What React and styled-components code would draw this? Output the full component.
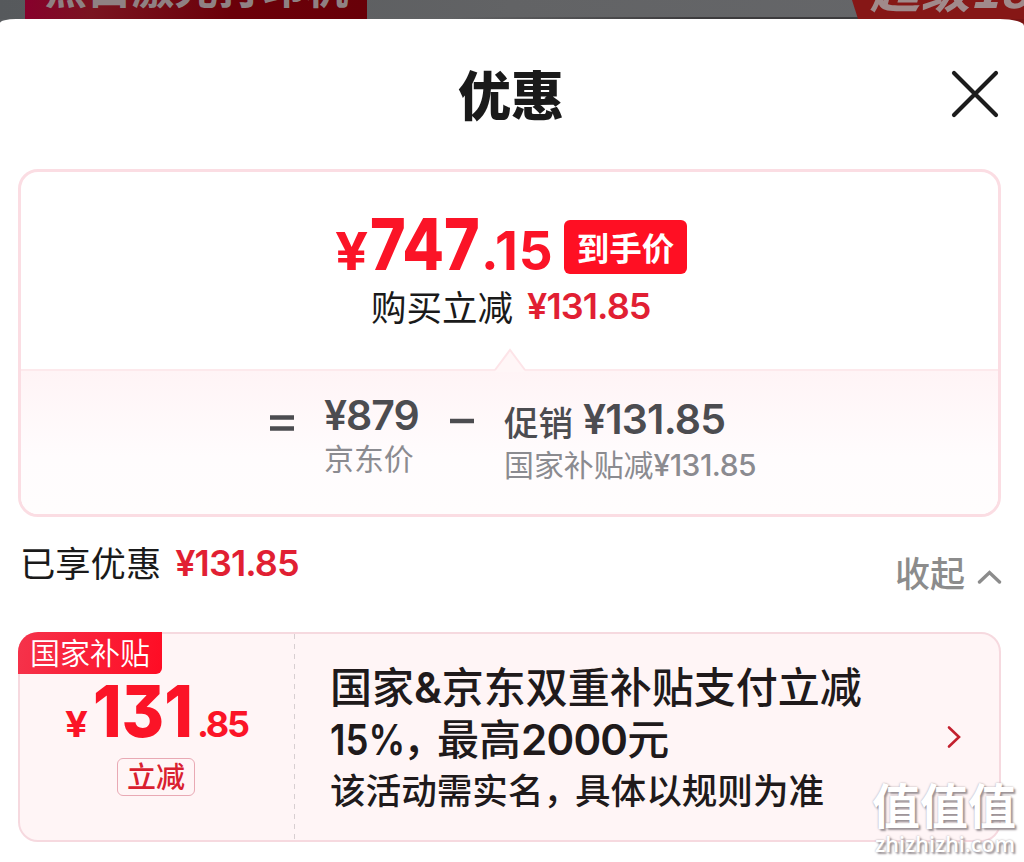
import React from 'react'
import styled, { createGlobalStyle } from 'styled-components'

const GlobalStyle = createGlobalStyle`
	* {
		box-sizing: border-box;
	}

	body {
		margin: 0;
		background: #fff;
		color: #1a1a1a;
		font-family: 'Noto Sans CJK SC', sans-serif;
	}
`

const Page = styled.div`
	width: 1024px;
	height: 862px;
	overflow: hidden;
	position: relative;
	background: linear-gradient(to right, #5a5d60 0 860px, #7a1414 860px);
`

const Backdrop = styled.div`
	height: 19px;
	overflow: hidden;
	display: flex;
	justify-content: space-between;
	align-items: flex-end;
	padding-left: 25px;
	background: linear-gradient(to right, transparent 450px, #3c3b3d 700px) left
			bottom / 100% 2px no-repeat,
		linear-gradient(to right, #56595c, #626365 50%, #66676a);
`

const ProductBanner = styled.div`
	width: 342px;
	height: 19px;
	display: flex;
	align-items: flex-end;
	padding: 0 0 12px 19px;
	background: linear-gradient(100deg, #87002c, #7a1420 20%, #6b0009 60%, #680008);
	color: #8f8183;
	font-size: 43.5px;
	font-weight: 700;
	line-height: 43px;
	white-space: nowrap;
`

const SaleBanner = styled.div`
	width: 172px;
	height: 19px;
	display: flex;
	align-items: flex-end;
	padding: 0 0 6px 18px;
	background: #861716;
	clip-path: polygon(0 0, 100% 0, 100% 100%, 6px 100%);
	color: #a08a8b;
	font-size: 50px;
	font-weight: 700;
	font-style: italic;
	line-height: 54px;
	white-space: nowrap;
`

const Sheet = styled.main`
	height: 843px;
	padding: 0 23px 0 18px;
	background: #fff;
	border-top-left-radius: 16px 4px;
	border-top-right-radius: 24px 7px;
`

const Header = styled.header`
	height: 150px;
	display: grid;
	grid-template-columns: 1fr auto 1fr;
	align-items: center;
	padding: 0 2px 0 5px;

	h1 {
		grid-column: 2;
		margin: 0 0 2px;
		font-size: 53px;
		font-weight: 900;
		line-height: 60px;
	}
`

const CloseButton = styled.button`
	justify-self: end;
	padding: 0;
	border: none;
	background: none;
	display: flex;

	svg {
		width: 48px;
		height: 48px;
	}
`

const Digits = styled.span`
	display: inline-block;
	width: ${(p) => (p.$width ? `${p.$width}px` : 'auto')};
	font-family: Inter, 'Noto Sans CJK SC', sans-serif;
	font-size: ${(p) => p.$size}px;
	font-weight: ${(p) => p.$weight || 600};
	letter-spacing: ${(p) => p.$spacing || 0}px;
	color: ${(p) => p.$color || 'inherit'};
	font-feature-settings: ${(p) => (p.$flat ? "'cv09'" : 'normal')};
	line-height: 1;
	white-space: nowrap;
	transform: translateY(${(p) => -(p.$lift || 0)}px) scaleX(${(p) => p.$stretch || 1});
	transform-origin: left;
`

const PriceCard = styled.section`
	height: 348px;
	border: 3px solid #fbdde3;
	border-radius: 20px;
	overflow: hidden;
`

const PriceTop = styled.div`
	height: 197px;
	padding-top: 36px;
`

const PriceRow = styled.div`
	height: 78px;
	padding-left: 314px;
	display: flex;
	align-items: baseline;
	color: #fb1427;
`

const FinalTag = styled.span`
	width: 123px;
	height: 54px;
	align-self: flex-start;
	margin-top: 12px;
	border-radius: 6px;
	background: #ff0f23;
	color: #fff;
	font-size: 32.5px;
	font-weight: 700;
	line-height: 54px;
	text-align: center;
`

const SavedRow = styled.div`
	height: 40px;
	padding-left: 350px;
	display: flex;
	align-items: baseline;
	gap: 14px;
	font-size: 35.5px;
	line-height: 40px;
`

const Formula = styled.div`
	position: relative;
	height: 145px;
	padding: 0 0 0 249px;
	display: flex;
	border-top: 2px solid #fde9ec;
	background: linear-gradient(#fff4f6, #fffcfd 60%, #fffdfd);
	color: #4c4c50;
`

const Notch = styled.svg`
	position: absolute;
	left: 473px;
	top: -23px;
	width: 32px;
	height: 24px;
`

const Operator = styled.svg`
	flex: none;
	width: 26px;
	height: 26px;
	margin-top: 39px;
`

const Term = styled.div`
	margin-left: ${(p) => p.$left}px;
	width: ${(p) => p.$width}px;
	padding-top: ${(p) => p.$top}px;
	white-space: nowrap;
`

const TermValue = styled.div`
	height: ${(p) => p.$height || 43}px;
	display: flex;
	align-items: baseline;
	gap: 10px;
	font-size: 34.5px;
	font-weight: 500;
	line-height: 44px;
`

const TermLabel = styled.div`
	height: 42px;
	display: flex;
	align-items: baseline;
	color: #8b8b90;
	font-size: 29.9px;
	line-height: 42px;
`

const SummaryRow = styled.div`
	height: 115px;
	padding: 23px 0 0 2px;
	display: flex;
	justify-content: space-between;
`

const Enjoyed = styled.div`
	display: flex;
	align-items: baseline;
	gap: 14px;
	height: 44px;
	font-size: 35.3px;
	line-height: 44px;
`

const Collapse = styled.button`
	height: 44px;
	margin: 10px -1px 0 0;
	padding: 0;
	border: none;
	background: none;
	display: flex;
	align-items: center;
	gap: 12px;
	color: #8c8c8c;
	font-family: inherit;
	font-size: 35px;
	font-weight: 500;
	line-height: 44px;

	svg {
		width: 25px;
		height: 15px;
		margin-top: 8px;
	}
`

const Coupon = styled.section`
	height: 210px;
	display: flex;
	border: 2px solid #f6d9df;
	border-radius: 20px;
	background: #fff5f6;
	position: relative;
`

const CouponAmount = styled.div`
	width: 275px;
	padding-top: 41px;
	background: linear-gradient(#d8cfd1 50%, transparent 50%) right top / 1px 10px
		repeat-y;
`

const CouponTag = styled.span`
	position: absolute;
	left: -2px;
	top: -2px;
	width: 144px;
	height: 42px;
	border-radius: 20px 0 6px 0;
	background: linear-gradient(100deg, #f5334b, #ff0c24);
	color: #fff;
	font-size: 30px;
	font-weight: 350;
	line-height: 39px;
	text-align: center;
`

const AmountRow = styled.div`
	height: 83px;
	padding-left: 45px;
	display: flex;
	align-items: baseline;
	color: #fb1427;
`

const Badge = styled.span`
	display: block;
	width: 78px;
	height: 38px;
	margin-left: 97px;
	border: 1px solid #e9a9b4;
	border-radius: 6px;
	color: #d9202f;
	font-size: 29px;
	font-weight: 500;
	line-height: 33px;
	text-align: center;
`

const CouponBody = styled.div`
	flex: 1;
	padding: 25px 0 0 35px;
	color: #201a1b;
	white-space: nowrap;

	h2 {
		margin: 0;
		font-size: 42px;
		font-weight: 500;
		line-height: 52px;
	}

	p {
		margin: 0;
		font-size: 35.6px;
		font-weight: 500;
		line-height: 52px;
	}
`

const Comma = styled.span`
	margin-right: ${(p) => p.$tight}px;
`

const CouponArrow = styled.svg`
	width: 16px;
	height: 26px;
	margin: 90px 37px 0 0;
`

const Watermark = styled.div`
	position: absolute;
	left: 872px;
	top: 776px;
	width: 150px;
	color: #fff;
	text-shadow: 2px 2px 2px #9a9296, 0 0 2px #a8a0a4;
	white-space: nowrap;

	strong {
		display: block;
		font-size: 48px;
		font-weight: 700;
		line-height: 54px;
	}

	span {
		display: block;
		margin: 2px 0 0 3px;
		font-family: 'Open Sans', sans-serif;
		font-size: 21.5px;
		font-weight: 600;
		line-height: 24px;
	}
`

const App = () => {
	return (
		<Page>
			<GlobalStyle />
			<Backdrop>
				<ProductBanner>黑白激光打印机</ProductBanner>
				<SaleBanner>超级18</SaleBanner>
			</Backdrop>

			<Sheet>
				<Header>
					<h1>优惠</h1>
					<CloseButton aria-label='关闭'>
						<svg viewBox='0 0 48 48' fill='none'>
							<path
								d='M3 3 45 45M45 3 3 45'
								stroke='#1c1c1c'
								strokeWidth='4.2'
								strokeLinecap='round'
							/>
						</svg>
					</CloseButton>
				</Header>

				<PriceCard>
					<PriceTop>
						<PriceRow>
							<Digits $size={52} $weight={700} $stretch={1.12} $width={35}>¥</Digits>
							<Digits $size={72} $weight={800} $stretch={0.845} $width={111}>747</Digits>
							<Digits $size={53} $weight={700} $spacing={1} $width={83}>.15</Digits>
							<FinalTag>到手价</FinalTag>
						</PriceRow>
						<SavedRow>
							购买立减
							<Digits $size={36} $color='#e11f33' $spacing={-0.9} $lift={2}>
								¥131.85
							</Digits>
						</SavedRow>
					</PriceTop>

					<Formula>
						<Notch viewBox='0 0 32 24'>
							<path d='M1 23 16 3 31 23V24H1Z' fill='#fff6f7' />
							<path d='M1 22 16 2 31 22' fill='none' stroke='#fde4e8' strokeWidth='2' />
						</Notch>
						<Operator viewBox='0 0 26 26'>
							<path d='M0 7.500H24M0 18.500H24' stroke='#4c4c50' strokeWidth='4.500' />
						</Operator>
						<Term $left={28} $width={125} $top={24}>
							<TermValue $height={41}>
								<Digits $size={41} $spacing={-1}>¥879</Digits>
							</TermValue>
							<TermLabel>京东价</TermLabel>
						</Term>
						<Operator viewBox='0 0 26 26'>
							<path d='M1 11H25' stroke='#4c4c50' strokeWidth='4.500' />
						</Operator>
						<Term $left={29} $width={260} $top={28}>
							<TermValue>
								促销
								<Digits $size={41} $spacing={-0.8} $lift={2}>¥131.85</Digits>
							</TermValue>
							<TermLabel>
								国家补贴减
								<Digits $size={30} $weight={500} $spacing={-0.5}>¥131.85</Digits>
							</TermLabel>
						</Term>
					</Formula>
				</PriceCard>

				<SummaryRow>
					<Enjoyed>
						已享优惠
						<Digits $size={36} $color='#e11f33' $spacing={-0.9} $lift={1}>
							¥131.85
						</Digits>
					</Enjoyed>
					<Collapse>
						收起
						<svg viewBox='0 0 25 15' fill='none'>
							<path
								d='M2.500 13 12.500 3.500 22.500 13'
								stroke='#8c8c8c'
								strokeWidth='3.4'
								strokeLinecap='round'
							/>
						</svg>
					</Collapse>
				</SummaryRow>

				<Coupon>
					<CouponTag>国家补贴</CouponTag>
					<CouponAmount>
						<AmountRow>
							<Digits $size={35} $weight={700} $stretch={1.15} $width={28}>¥</Digits>
							<Digits $size={72} $weight={800} $stretch={0.9} $width={104} $flat>
								131
							</Digits>
							<Digits $size={36} $weight={700} $spacing={-2.2}>.85</Digits>
						</AmountRow>
						<Badge>立减</Badge>
					</CouponAmount>
					<CouponBody>
						<h2>
							国家<Digits $size={42}>&amp;</Digits>京东双重补贴支付立减
							<br />
							<Digits $size={42} $stretch={0.87} $width={73}>15%</Digits>
							<Comma $tight={-8}>，</Comma>最高
							<Digits $size={42} $spacing={-0.75}>2000</Digits>元
						</h2>
						<p>
							该活动需实名<Comma $tight={-4}>，</Comma>具体以规则为准
						</p>
					</CouponBody>
					<CouponArrow viewBox='0 0 16 26' fill='none'>
						<path
							d='M3 3.500 13 13 3 22.500'
							stroke='#c3202e'
							strokeWidth='2.600'
							strokeLinecap='round'
						/>
					</CouponArrow>
				</Coupon>
			</Sheet>

			<Watermark>
				<strong>值值值</strong>
				<span>zhizhizhi.com</span>
			</Watermark>
		</Page>
	)
}

export default App
